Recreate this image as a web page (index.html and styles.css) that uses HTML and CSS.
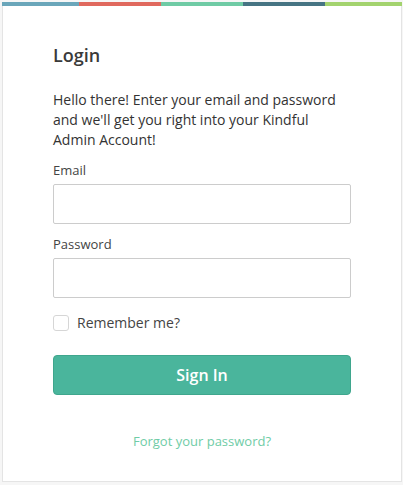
FILE: index.html
```html
<!DOCTYPE html>
<html>
<head>
<meta charset="utf-8">
<link rel="stylesheet" href="styles.css">
</head>
<body>
<div class="card">
  <div class="stripe">
    <span class="s1"></span><span class="s2"></span><span class="s3"></span><span class="s4"></span><span class="s5"></span>
  </div>
  <div class="body">
    <h1 class="title">Login</h1>
    <p class="intro">Hello there! Enter your email and password and we'll get you right into your Kindful Admin Account!</p>
    <label class="label">Email</label>
    <input class="input" type="text">
    <label class="label label-pw">Password</label>
    <input class="input" type="password">
    <div class="remember"><span class="check"></span><span>Remember me?</span></div>
    <button class="btn">Sign In</button>
    <div class="forgot">Forgot your password?</div>
  </div>
</div>
</body>
</html>
```
FILE: styles.css
```css
* { box-sizing: border-box; }
html, body { margin: 0; padding: 0; }
body {
  background: #f6f6f6;
  font-family: "Open Sans", "Liberation Sans", sans-serif;
  color: #333;
  padding: 2px 1px 0 2px;
}
.card {
  width: 400px;
  background: #fff;
}
.stripe {
  display: flex;
  height: 4px;
}
.stripe span { display: block; height: 100%; }
.s1 { width: 77px; background: #6aa6ba; }
.s2 { width: 82px; background: #e0695e; }
.s3 { width: 82px; background: #6fcba5; }
.s4 { width: 82px; background: #467483; }
.s5 { flex: 1; background: #a3d36e; }
.body {
  border: 1px solid #e4e4e4;
  border-top: none;
  padding: 37px 50px 30px 50px;
  display: flex;
  flex-direction: column;
}
.title {
  margin: 0;
  font-size: 18px;
  line-height: 24px;
  font-weight: 600;
  color: #3a3a3a;
}
.intro {
  margin: 23px 0 0 0;
  font-size: 14px;
  line-height: 20px;
  color: #333;
}
.label {
  margin-top: 10px;
  font-size: 13px;
  line-height: 20px;
  color: #444;
}
.input {
  margin-top: 4px;
  width: 100%;
  height: 40px;
  border: 1px solid #cccccc;
  border-radius: 2px;
  background: #fff;
  font-family: inherit;
  font-size: 14px;
  padding: 0 10px;
}
.remember {
  margin-top: 17px;
  display: flex;
  align-items: center;
  gap: 8px;
  font-size: 14px;
  line-height: 16px;
  color: #444;
}
.check {
  width: 16px;
  height: 16px;
  border: 1px solid #d6d6d6;
  border-radius: 3px;
  background: #fff;
}
.btn {
  margin-top: 24px;
  width: 100%;
  height: 40px;
  background: #4ab59c;
  border: 1px solid #3fa68d;
  border-radius: 4px;
  color: #fff;
  font-family: inherit;
  font-size: 16px;
  font-weight: 600;
}
.forgot {
  margin-top: 36px;
  text-align: center;
  font-size: 13px;
  line-height: 20px;
  color: #6fcca6;
}
```
